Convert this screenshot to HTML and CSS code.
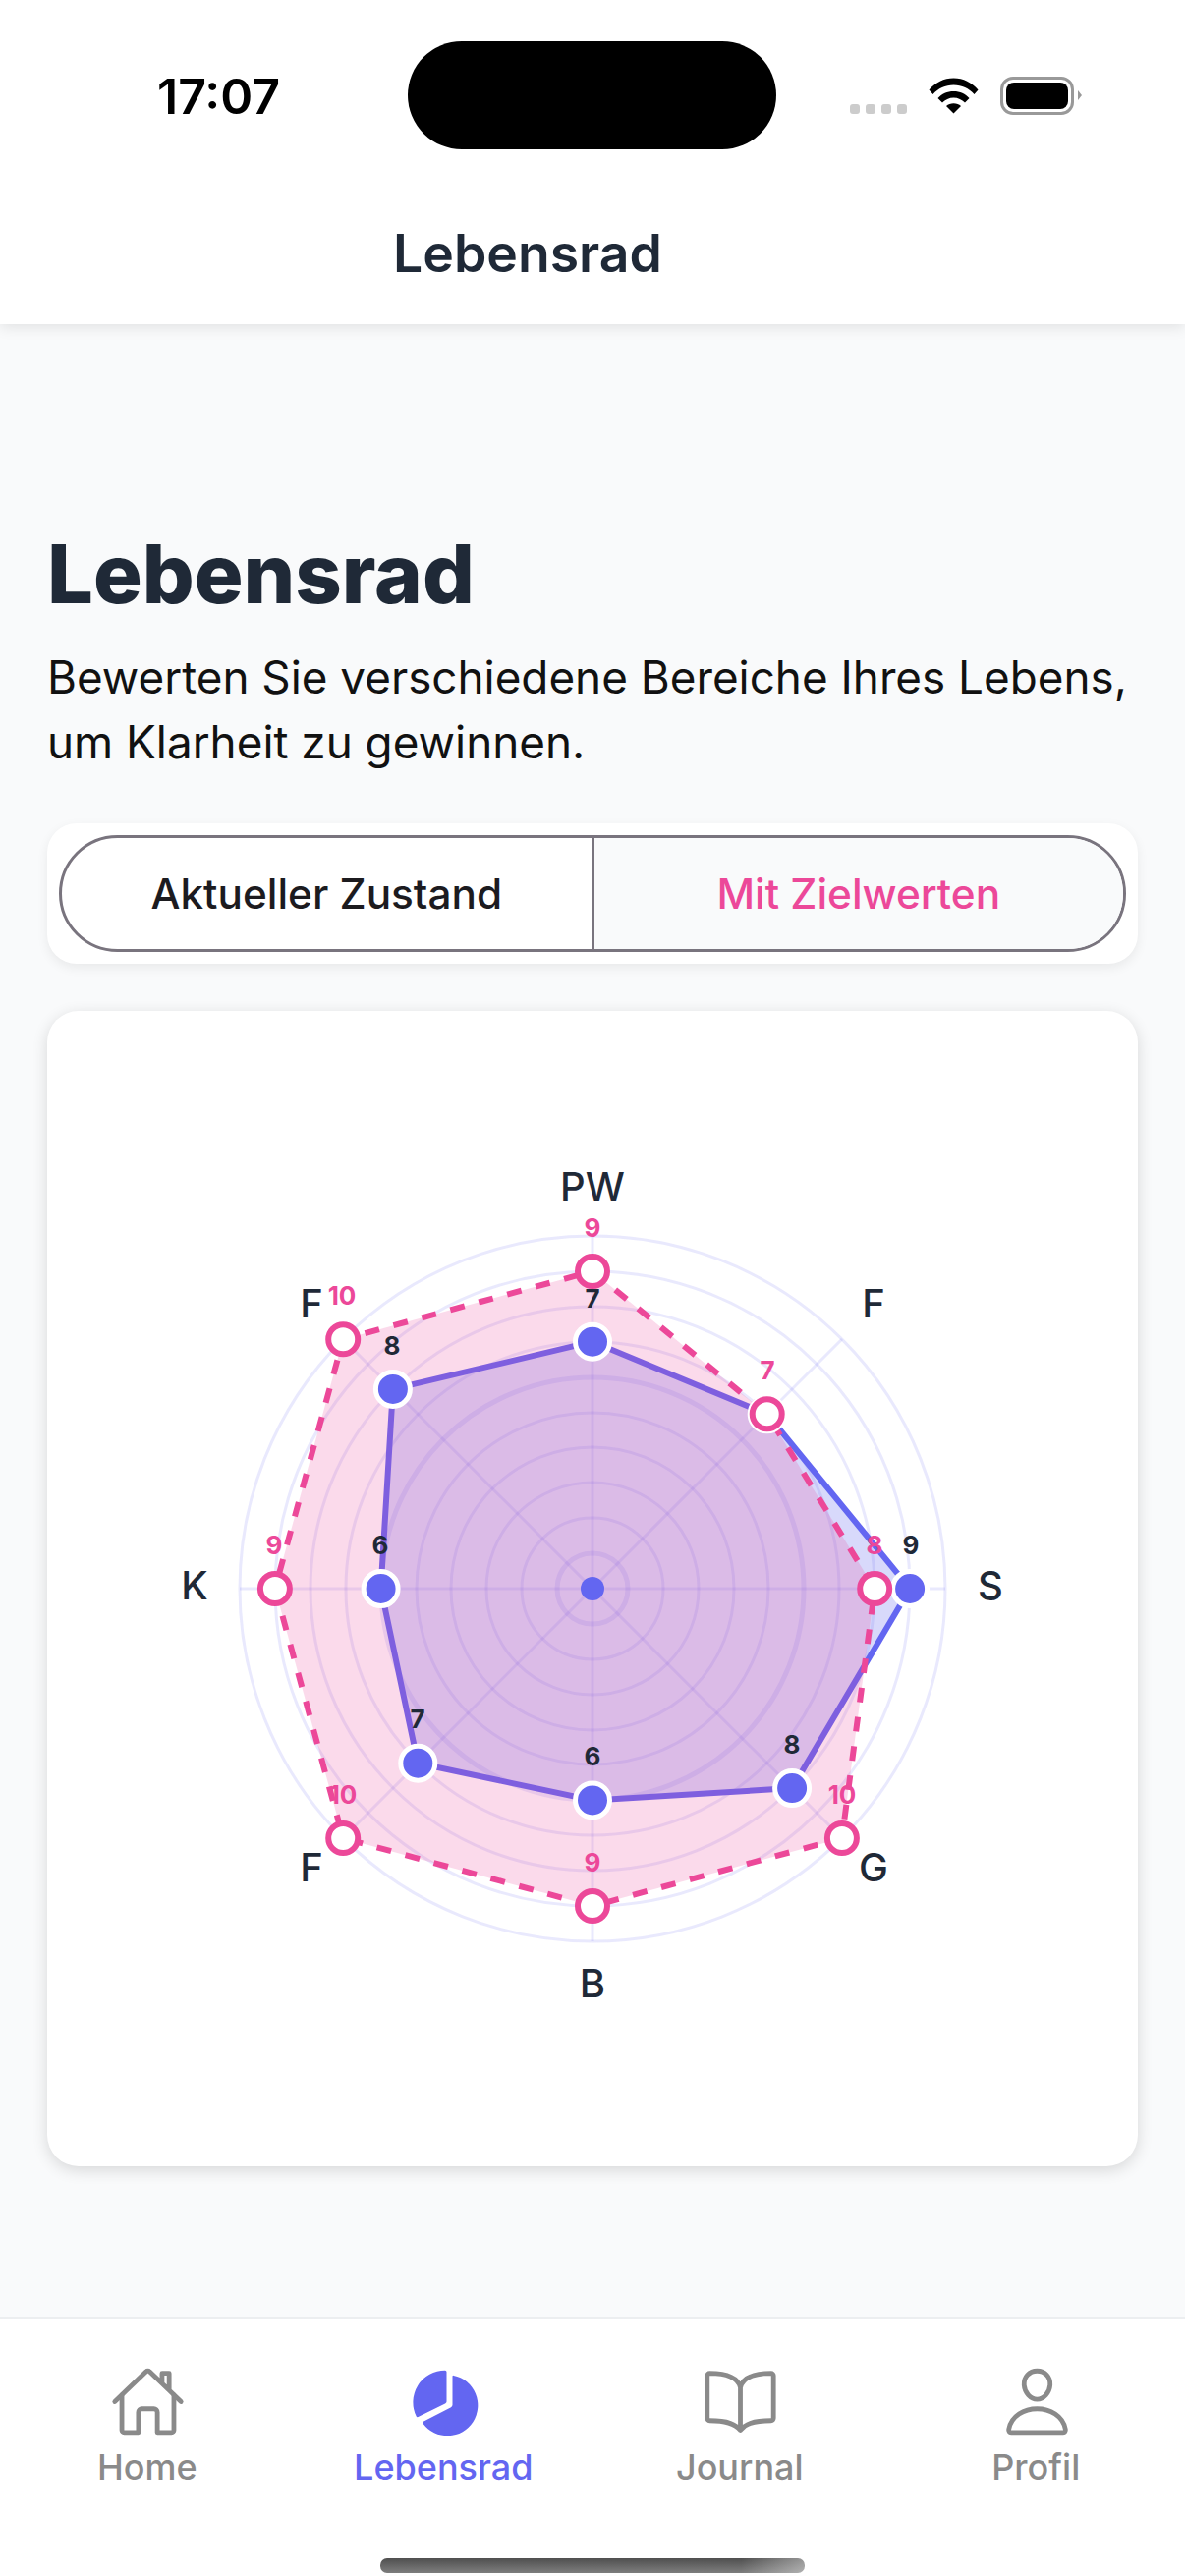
FILE: index.html
```html
<!DOCTYPE html>
<html lang="de">
<head>
<meta charset="UTF-8">
<meta name="viewport" content="width=device-width, initial-scale=1.0">
<title>Lebensrad</title>
<link rel="stylesheet" href="styles.css">
</head>
<body>

<header class="top-header">
    <div class="status-bar">
        <span class="status-time">17:07</span>
        <div class="status-island"></div>
        <div class="status-icons">
            <div class="signal-dots"><i></i><i></i><i></i><i></i></div>
            <svg class="wifi-icon" width="51" height="37" viewBox="0 0 51 37">
                <path d="M0.5 12.5C7 5 15.500 0.500 25.500 0.500S44 5 50.500 12.500L46.500 17C41 11 34 7.500 25.500 7.500S10 11 4.500 17Z"/>
                <path d="M9.500 21C13.500 16.500 19 14 25.500 14S37.500 16.500 41.500 21L37 25.500C34 22.500 30 20.500 25.500 20.500S17 22.500 14 25.500Z"/>
                <path d="M18 29C20 27.300 22.500 26.300 25.500 26.300S31 27.300 33 29L25.500 36.500Z"/>
            </svg>
            <div class="battery"><div class="battery-level"></div></div>
        </div>
    </div>
    <div class="header-title">Lebensrad</div>
</header>

<main class="content">
    <h1>Lebensrad</h1>
    <p class="intro">Bewerten Sie verschiedene Bereiche Ihres Lebens, um Klarheit zu gewinnen.</p>

    <div class="segment-card">
        <div class="segment">
            <div class="segment-btn">Aktueller Zustand</div>
            <div class="segment-btn active">Mit Zielwerten</div>
        </div>
    </div>

    <div class="chart-card">
        <svg class="radar" width="1110" height="1176" viewBox="0 0 1110 1176">
            <!-- grid -->
            <g class="grid">
                <circle class="thick" cx="555" cy="588" r="36"/>
                <circle cx="555" cy="588" r="72"/>
                <circle cx="555" cy="588" r="108"/>
                <circle cx="555" cy="588" r="144"/>
                <circle cx="555" cy="588" r="179"/>
                <circle class="thick" cx="555" cy="588" r="215"/>
                <circle cx="555" cy="588" r="251"/>
                <circle cx="555" cy="588" r="287"/>
                <circle cx="555" cy="588" r="323"/>
                <circle cx="555" cy="588" r="359"/>
                <line x1="555" y1="588" x2="555" y2="229"/>
                <line x1="555" y1="588" x2="809" y2="334"/>
                <line x1="555" y1="588" x2="914" y2="588"/>
                <line x1="555" y1="588" x2="809" y2="842"/>
                <line x1="555" y1="588" x2="555" y2="947"/>
                <line x1="555" y1="588" x2="301" y2="842"/>
                <line x1="555" y1="588" x2="196" y2="588"/>
                <line x1="555" y1="588" x2="301" y2="334"/>
            </g>

            <polygon class="area-current" points="555,336.7 732.7,410.3 878.1,588 758.1,791.1 555,803.4 377.3,765.7 339.6,588 351.900,384.900"/>
            <polygon class="area-target" points="555,264.9 732.7,410.3 842.2,588 808.9,841.9 555,911.1 301.2,841.9 231.9,588 301.2,334.2"/>

            <circle class="center-dot" cx="555" cy="588" r="12"/>
            <g class="dots-current">
                <circle cx="555" cy="336.7" r="17.500"/>
                <circle cx="732.7" cy="410.3" r="17.500"/>
                <circle cx="878.1" cy="588" r="17.500"/>
                <circle cx="758.1" cy="791.1" r="17.500"/>
                <circle cx="555" cy="803.4" r="17.500"/>
                <circle cx="377.3" cy="765.7" r="17.500"/>
                <circle cx="339.6" cy="588" r="17.500"/>
                <circle cx="351.9" cy="384.9" r="17.500"/>
            </g>
            <g class="dots-target">
                <circle cx="555" cy="264.9" r="15"/>
                <circle cx="732.7" cy="410.3" r="15"/>
                <circle cx="842.2" cy="588" r="15"/>
                <circle cx="808.9" cy="841.9" r="15"/>
                <circle cx="555" cy="911.1" r="15"/>
                <circle cx="301.2" cy="841.9" r="15"/>
                <circle cx="231.9" cy="588" r="15"/>
                <circle cx="301.2" cy="334.2" r="15"/>
            </g>

            <g class="values-current">
                <text x="555" y="302">7</text>
                <text x="879" y="553">9</text>
                <text x="758" y="756">8</text>
                <text x="555" y="768">6</text>
                <text x="377" y="730">7</text>
                <text x="339" y="553">6</text>
                <text x="351" y="350">8</text>
            </g>
            <g class="values-target">
                <text x="555" y="230">9</text>
                <text x="733" y="375">7</text>
                <text x="842" y="553">8</text>
                <text x="809" y="807">10</text>
                <text x="555" y="876">9</text>
                <text x="301" y="807">10</text>
                <text x="231" y="553">9</text>
                <text x="300" y="299">10</text>
            </g>

            <g class="axis-labels">
                <text x="555" y="193">PW</text>
                <text x="841" y="312">F</text>
                <text x="960" y="599">S</text>
                <text x="841" y="886">G</text>
                <text x="555" y="1004">B</text>
                <text x="269" y="886">F</text>
                <text x="150" y="599">K</text>
                <text x="269" y="312">F</text>
            </g>
        </svg>
    </div>
</main>

<nav class="tab-bar">
    <div class="tabs">
        <div class="tab">
            <svg class="tab-icon" viewBox="0 0 512 512">
                <path d="M80 212v236a16 16 0 0016 16h96V328a24 24 0 0124-24h80a24 24 0 0124 24v136h96a16 16 0 0016-16V212"/>
                <path d="M480 256L266.890 52c-5-5.280-16.690-5.340-21.780 0L32 256M400 179V64h-48v69"/>
            </svg>
            <span>Home</span>
        </div>
        <div class="tab active">
            <svg class="tab-icon" viewBox="0 0 77 77">
                <path class="solid" d="M46.500 12.800Q46.500 11.600 47.700 11.900A31 31 0 1 1 16.500 60.800Q15.300 59.800 16.800 58.800L45 44.200Q46.500 43.300 46.500 41.800Z"/>
                <path class="solid" d="M40.500 8.200Q40.500 6.700 39 6.700A32.500 32.500 0 0 0 9.700 53.500Q10.300 54.500 11.500 54L39 40.500Q40.500 39.700 40.500 38.500Z"/>
            </svg>
            <span>Lebensrad</span>
        </div>
        <div class="tab">
            <svg class="tab-icon" viewBox="0 0 512 512">
                <path d="M256 160c16-63.160 76.430-95.410 208-96a15.940 15.940 0 0116 16v288a16 16 0 01-16 16c-128 0-177.450 25.810-208 64-30.370-38-80-64-208-64-9.880 0-16-8.050-16-17.930V80a15.940 15.940 0 0116-16c131.570.59 192 32.840 208 96zM256 160v288"/>
            </svg>
            <span>Journal</span>
        </div>
        <div class="tab">
            <svg class="tab-icon" viewBox="0 0 512 512">
                <path d="M344 144c-3.920 52.870-44 96-88 96s-84.150-43.120-88-96c-4-55 35-96 88-96s92 42 88 96z"/>
                <path d="M256 304c-87 0-175.300 48-191.640 138.600C62.390 453.520 68.570 464 80 464h352c11.440 0 17.620-10.480 15.650-21.400C431.300 352 343 304 256 304z"/>
            </svg>
            <span>Profil</span>
        </div>
    </div>
    <div class="home-indicator"></div>
</nav>

</body>
</html>
```

FILE: styles.css
```css
* {
    box-sizing: border-box;
}
body {
    font-family: Inter, "Liberation Sans", sans-serif;
    background-color: #f9fafb;
    margin: 0;
    width: 1206px;
    height: 2622px;
    display: flex;
    flex-direction: column;
    overflow: hidden;
    color: #1f2937;
}

/* header + status bar */
.top-header {
    background-color: #fff;
    flex: none;
    height: 330px;
    padding-top: 42px;
    box-shadow: 0 3px 14px rgba(0,0,0,0.1);
    position: relative;
}
.status-bar {
    display: flex;
    align-items: center;
    height: 110px;
    padding-left: 160px;
}
.status-time {
    width: 255px;
    padding-top: 2px;
    font-size: 50px;
    font-weight: 600;
    color: #000;
}
.status-island {
    width: 375px;
    height: 110px;
    background-color: #000;
    border-radius: 55px;
}
.status-icons {
    display: flex;
    align-items: center;
    margin-left: 75px;
}
.signal-dots {
    display: flex;
    gap: 6px;
    margin-top: 28px;
}
.signal-dots i {
    display: block;
    width: 10px;
    height: 10px;
    border-radius: 3px;
    background-color: #ccc;
}
.wifi-icon {
    margin-left: 22px;
}
.battery {
    position: relative;
    width: 75px;
    height: 39px;
    margin-left: 22px;
    padding: 3px;
    border: 3px solid #999;
    border-radius: 13px;
}
.battery:after {
    content: "";
    position: absolute;
    right: -11px;
    top: 11px;
    border-left: 4px solid #999;
    border-top: 5px solid transparent;
    border-bottom: 5px solid transparent;
}
.battery-level {
    height: 100%;
    background-color: #000;
    border-radius: 8px;
}
.header-title {
    margin-top: 76px;
    padding-left: 400px;
    font-size: 53.5px;
    font-weight: 600;
    line-height: 60px;
    color: #1f2937;
}

/* main content */
.content {
    flex: 1;
    padding: 204px 48px 0;
}
h1 {
    margin: 0;
    font-size: 83px;
    font-weight: 800;
    line-height: 100px;
    color: #1f2937;
}
.intro {
    margin: 23px 0 0;
    font-size: 45.8px;
    line-height: 66px;
    color: #111;
}
.segment-card {
    margin-top: 49px;
    padding: 12px;
    background-color: #fff;
    border-radius: 30px;
    box-shadow: 0 4px 12px rgba(0,0,0,0.07);
}
.segment {
    display: flex;
    height: 119px;
    border: 3px solid #79747e;
    border-radius: 60px;
    overflow: hidden;
}
.segment-btn {
    flex: 1;
    display: flex;
    align-items: center;
    justify-content: center;
    font-size: 42.3px;
    font-weight: 500;
    color: #1c1b1f;
}
.segment-btn.active {
    background-color: #f9fafb;
    color: #ec4899;
    border-left: 3px solid #79747e;
}
.chart-card {
    height: 1176px;
    margin-top: 48px;
    background-color: #fff;
    border-radius: 32px;
    box-shadow: 0 4px 16px rgba(0,0,0,0.14);
}

/* radar chart */
.radar {
    display: block;
}
.grid circle, .grid line {
    fill: none;
    stroke: rgba(99,102,241,0.14);
    stroke-width: 3;
}
.grid .thick {
    stroke-width: 5;
}
.area-current {
    fill: rgba(99,102,241,0.25);
    stroke: #6366f1;
    stroke-width: 6;
}
.area-target {
    fill: rgba(236,72,153,0.2);
    stroke: #ec4899;
    stroke-width: 6;
    stroke-dasharray: 15 15;
}
.center-dot {
    fill: #6366f1;
}
.dots-current circle {
    fill: #6366f1;
    stroke: #fff;
    stroke-width: 5;
}
.dots-target circle {
    fill: #fff;
    stroke: #ec4899;
    stroke-width: 6;
}
.values-current text, .values-target text {
    font-size: 26px;
    font-weight: 700;
    text-anchor: middle;
}
.values-current text {
    fill: #1f2937;
}
.values-target text {
    fill: #ec4899;
}
.axis-labels text {
    font-size: 40px;
    font-weight: 500;
    text-anchor: middle;
    fill: #1f2937;
}

/* bottom nav */
.tab-bar {
    flex: none;
    height: 264px;
    background-color: #fff;
    border-top: 2px solid #eceef0;
}
.tabs {
    display: grid;
    grid-template-columns: repeat(4, 301.5px);
    padding-top: 46px;
}
.tab {
    display: flex;
    flex-direction: column;
    align-items: center;
    font-size: 36px;
    font-weight: 500;
    line-height: 40px;
    color: #8a8a8a;
}
.tab span {
    margin-right: 2px;
}
.tab.active {
    color: #6366f1;
}
.tab-icon {
    width: 77px;
    height: 77px;
    margin-bottom: 8px;
    fill: none;
    stroke: #8a8a8a;
    stroke-width: 32;
    stroke-linecap: round;
    stroke-linejoin: round;
}
.tab-icon .solid {
    fill: #6366f1;
    stroke: none;
}
.home-indicator {
    width: 432px;
    height: 15px;
    margin: 73px 0 0 387px;
    border-radius: 7px;
    background: linear-gradient(90deg, rgba(255,255,255,0) 85%, rgba(255,255,255,0.4)), linear-gradient(#4f4f4f, #7e7e7e);
}
```
